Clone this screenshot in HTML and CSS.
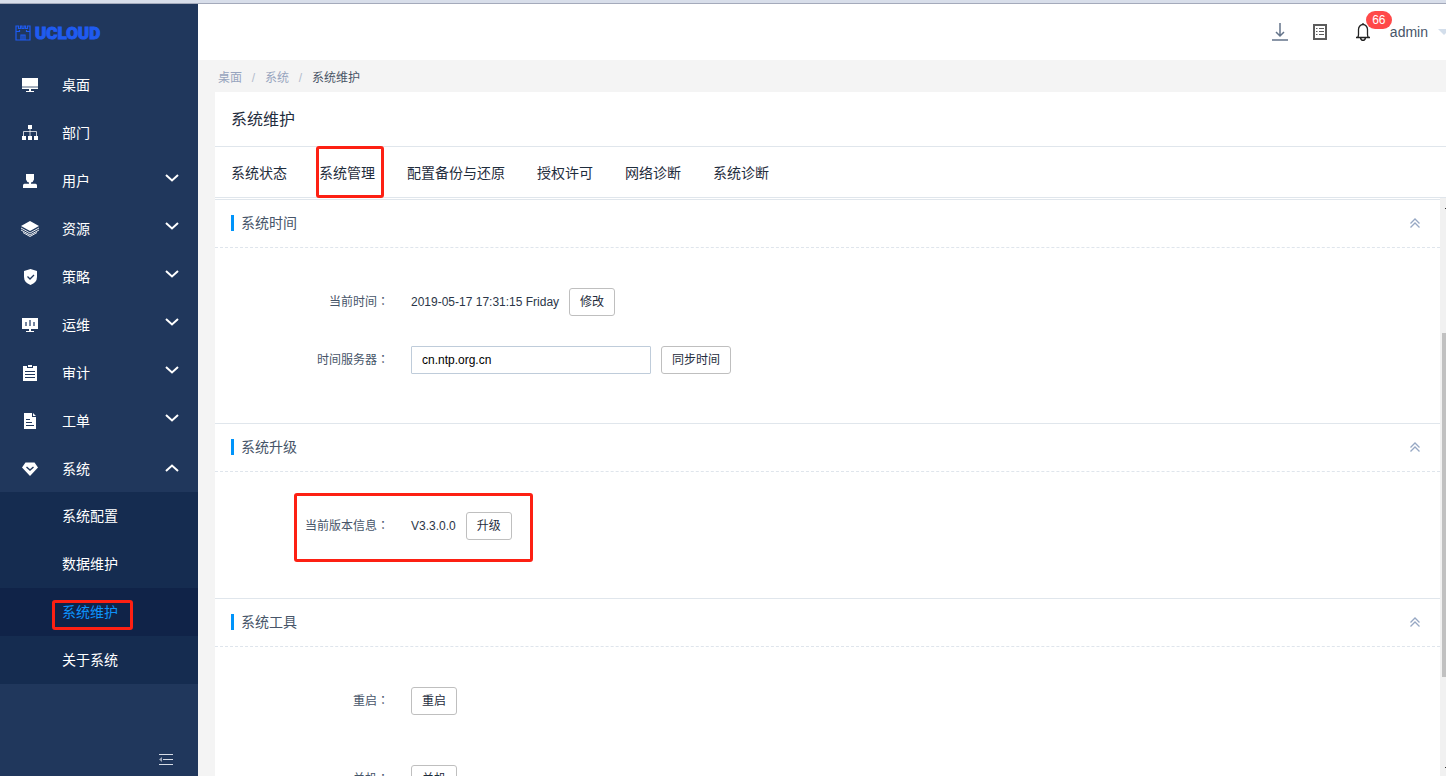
FILE: index.html
```html
<!DOCTYPE html>
<html lang="zh-CN">
<head>
<meta charset="utf-8">
<title>系统维护</title>
<link rel="stylesheet" href="styles.css">
</head>
<body>
<svg class="defs" aria-hidden="true">
  <symbol id="down" viewBox="0 0 14 16"><path d="M1 2l6 5.500L13 2" fill="none" stroke="currentColor" stroke-width="2"/></symbol>
  <symbol id="up" viewBox="0 0 14 16"><path d="M1 10l6-5.500 6 5.500" fill="none" stroke="currentColor" stroke-width="2"/></symbol>
  <symbol id="fold" viewBox="0 0 10 10"><path d="M.5 5.500L5 1l4.500 4.500M.5 9.500L5 5l4.500 4.500" fill="none" stroke="currentColor" stroke-width="1.300"/></symbol>
</svg>
<div class="app">
  <div class="strip"></div>
  <div class="frame">
    <aside class="sidebar">
      <a class="logo" href="#">
        <svg width="16" height="16" viewBox="0 0 16 16" fill="none" stroke="currentColor" stroke-width="1.200"><path d="M1 1h2.500v2.500h2V1h1.500v2.500h2V1h1.500v2.500h2V1H15v14H1zM1 6.500h3.500V5M15 6.500h-3.500V5M6 15v-5h4v5M8 10v5"/></svg>
        <span>UCLOUD</span>
      </a>
      <nav class="menu">
        <a class="item" href="#"><svg class="icon" viewBox="0 0 16 16"><path d="M0 1h16v8H0zM0 11h16v1H0zM7 12h2v2H7zM4 14h8v1H4z"/><path d="M0 9h16v2H0z" opacity=".6"/></svg><span>桌面</span></a>
        <a class="item" href="#"><svg class="icon" viewBox="0 0 16 16"><path d="M6 0h4v4H6zM0 11h4v4H0zM6 11h4v4H6zM12 11h4v4h-4z"/><path d="M8 4v7M1.500 11V6.500h13V11" fill="none" stroke="currentColor" opacity=".75"/></svg><span>部门</span></a>
        <a class="item" href="#"><svg class="icon" viewBox="0 0 16 16"><path d="M4 1h8v5.500Q11 9.500 9 9.500v1.200h4.500Q15 11 15 12.500V15H1v-2.500Q1 11 2.500 10.700H7V9.500Q5 9.500 4 6.500z"/></svg><span>用户</span><svg class="arrow"><use href="#down"/></svg></a>
        <a class="item" href="#"><svg class="icon" viewBox="0 0 20 16"><path d="M10 0l9 5-9 5-9-5z"/><path d="M1 7l9 5 9-5M1 9l9 5 9-5M3 11.500l7 4 7-4" fill="none" stroke="currentColor" stroke-width=".9"/></svg><span>资源</span><svg class="arrow"><use href="#down"/></svg></a>
        <a class="item" href="#"><svg class="icon" viewBox="0 0 16 16"><path d="M8.500 0L15 2v6q0 5.500-6.500 8Q2 13.500 2 8V2z"/><path d="M5.500 7.500L8 10l4-4" fill="none" stroke="#20375c" stroke-width="1.300"/></svg><span>策略</span><svg class="arrow"><use href="#down"/></svg></a>
        <a class="item" href="#"><svg class="icon" viewBox="0 0 16 16"><path d="M0 1h16v11H0zM7 12h2v2H7zM4 14h8v1H4z"/><path d="M3 5h2v4H3zM7 3h2v6H7zM11 5h2v4h-2z" fill="#7585a0"/></svg><span>运维</span><svg class="arrow"><use href="#down"/></svg></a>
        <a class="item" href="#"><svg class="icon" viewBox="0 0 16 16"><path d="M1 1h4v2h6V1h4v15H1zM6 0h4v2H6z"/><path d="M3 6.500h10M3 9.500h10M3 12.500h10" stroke="#20375c"/></svg><span>审计</span><svg class="arrow"><use href="#down"/></svg></a>
        <a class="item" href="#"><svg class="icon" viewBox="0 0 16 16"><path d="M2 0h8v4h4v12H2zM11 0l3 3h-3z"/><path d="M4 6.500h4M4 9.500h6M4 12.500h8" stroke="#20375c"/></svg><span>工单</span><svg class="arrow"><use href="#down"/></svg></a>
        <a class="item" href="#"><svg class="icon" viewBox="0 0 16 16"><path d="M3.500 1.500h9L16 6.500 8 15 0 6.500z"/><path d="M4.500 6L8 9l3.500-3" fill="none" stroke="#20375c" stroke-width="1.400"/></svg><span>系统</span><svg class="arrow"><use href="#up"/></svg></a>
        <div class="submenu">
          <a class="subitem" href="#">系统配置</a>
          <a class="subitem" href="#">数据维护</a>
          <a class="subitem active" href="#">系统维护<i class="mark mark-menu"></i></a>
          <a class="subitem" href="#">关于系统</a>
        </div>
      </nav>
      <button class="collapse" aria-label="收起菜单"><svg width="14" height="14" viewBox="0 0 14 14"><path d="M0 1.500h14M4 6.500h10M0 11.500h14" stroke="currentColor"/><path d="M0 6.500L3 4v5z" fill="currentColor" opacity=".7"/></svg></button>
    </aside>
    <div class="main">
      <header class="topbar">
        <button class="tool" aria-label="下载"><svg width="16" height="18" viewBox="0 0 16 18" fill="none" stroke="#64748a" stroke-width="1.500"><path d="M8 0v13M4 9l4 4 4-4M0 17h16"/></svg></button>
        <button class="tool" aria-label="任务"><svg width="16" height="18" viewBox="0 0 16 18" fill="none" stroke="#5c5c5c"><path d="M2 2h12v14H2z" stroke-width="2"/><path d="M4 5.500h1.500M7 5.500h5M4 8.500h1.500M7 8.500h5M4 11.500h1.500M7 11.500h5"/></svg></button>
        <button class="tool bell" aria-label="消息"><svg width="16" height="18" viewBox="0 0 16 18" fill="none" stroke="#222" stroke-width="1.300"><path d="M1 14.500h14M2.500 14.500q1-1 1-3V6.500a4.500 5 0 0 1 9 0v5q0 2 1 3M8 0v2M5.500 15q.5 2.300 2.500 2.300t2.500-2.300"/></svg><span class="badge">66</span></button>
        <button class="account">admin<svg width="8" height="8" viewBox="0 0 8 8"><path d="M0 1h12L6 7z" fill="#d3deeb"/></svg></button>
      </header>
      <nav class="crumbs"><a href="#">桌面</a><i>/</i><a href="#">系统</a><i>/</i><span>系统维护</span></nav>
      <main class="panel">
        <h1>系统维护</h1>
        <nav class="tabs">
          <a href="#">系统状态</a>
          <a href="#">系统管理<i class="mark mark-tab"></i></a>
          <a href="#">配置备份与还原</a>
          <a href="#">授权许可</a>
          <a href="#">网络诊断</a>
          <a href="#">系统诊断</a>
        </nav>
        <div class="scroll">
          <div class="content">
            <section>
              <h2>系统时间<button class="fold" aria-label="折叠系统时间"><svg width="10" height="10"><use href="#fold"/></svg></button></h2>
              <div class="body near">
                <div class="row"><span class="label">当前时间<b lang="zh-TW">：</b></span><div class="value"><span>2019-05-17 17:31:15 Friday</span><button class="btn">修改</button></div></div>
                <div class="row"><label class="label" for="ntp">时间服务器<b lang="zh-TW">：</b></label><div class="value"><input id="ntp" type="text" value="cn.ntp.org.cn"><button class="btn">同步时间</button></div></div>
              </div>
            </section>
            <section>
              <h2>系统升级<button class="fold" aria-label="折叠系统升级"><svg width="10" height="10"><use href="#fold"/></svg></button></h2>
              <div class="body single">
                <div class="row"><span class="label">当前版本信息<b lang="zh-TW">：</b></span><div class="value"><span>V3.3.0.0</span><button class="btn">升级</button></div><i class="mark mark-row"></i></div>
              </div>
            </section>
            <section>
              <h2>系统工具<button class="fold" aria-label="折叠系统工具"><svg width="10" height="10"><use href="#fold"/></svg></button></h2>
              <div class="body far">
                <div class="row"><span class="label">重启<b lang="zh-TW">：</b></span><div class="value"><button class="btn">重启</button></div></div>
                <div class="row"><span class="label">关机<b lang="zh-TW">：</b></span><div class="value"><button class="btn">关机</button></div></div>
              </div>
            </section>
          </div>
          <div class="track"><div class="cap"></div><div class="thumb"></div><div class="cap"></div></div>
        </div>
      </main>
    </div>
  </div>
</div>
</body>
</html>
```

FILE: styles.css
```css
* { box-sizing: border-box; }
body {
  margin: 0;
  font: 12px/20px "Liberation Sans", "Noto Sans CJK SC", sans-serif;
  color: #2b3648;
  background: #f4f4f4;
}
a { color: inherit; text-decoration: none; }
button { margin: 0; padding: 0; border: 0; background: none; font: inherit; color: inherit; }
h1, h2 { margin: 0; font-weight: 400; }
svg { display: block; flex: none; }
.defs { display: none; }

.app { height: 100vh; display: flex; flex-direction: column; overflow: hidden; }
.strip { flex: none; height: 4px; background: #d8deea; border-bottom: 1px solid #a4aabb; }
.frame { flex: 1; min-height: 0; display: flex; }

.sidebar {
  width: 198px;
  flex: none;
  display: flex;
  flex-direction: column;
  background: #20375c;
  color: #fff;
  font-size: 14px;
}
.logo {
  height: 56px;
  padding: 2px 15px 0;
  display: flex;
  align-items: center;
  gap: 4px;
  color: #1f5bf0;
  font: 900 17px/20px Roboto, sans-serif;
  -webkit-text-stroke: 1px #1f5bf0;
}
.menu { flex: 1; }
.item { display: flex; align-items: center; height: 48px; padding: 2px 19px 0 20px; }
.icon { width: 20px; height: 16px; margin-right: 22px; fill: currentColor; }
.arrow { width: 14px; height: 16px; margin-left: auto; }
.submenu { background: #152c50; }
.subitem { position: relative; display: block; height: 48px; padding-left: 62px; line-height: 48px; }
.subitem.active { background: #102348; color: #0d93fb; }
.collapse { align-self: flex-end; margin: 0 25px 9px; color: #d5dbe5; }

.mark { position: absolute; border: 3px solid #fd2013; border-radius: 3px; pointer-events: none; }
.mark-menu { left: 52px; top: 12px; width: 81px; height: 30px; }
.mark-tab { left: -3px; top: -1px; width: 68px; height: 52px; }
.mark-row { left: 79px; top: -19px; width: 239px; height: 69px; }

.main { flex: 1; min-width: 0; display: flex; flex-direction: column; }
.topbar {
  flex: none;
  height: 56px;
  display: flex;
  align-items: center;
  justify-content: flex-end;
  background: #fff;
}
.tool { margin-right: 24px; }
.bell { position: relative; margin: 0 19px 0 3px; }
.badge {
  position: absolute;
  left: 11px;
  top: -12px;
  width: 26px;
  height: 18px;
  border-radius: 9px;
  background: #ff4949;
  color: #fff;
  line-height: 18px;
  text-align: center;
}
.account { display: flex; align-items: center; gap: 10px; font-size: 14px; color: #475569; }

.crumbs { flex: none; height: 32px; padding: 4px 20px 0; display: flex; align-items: center; color: #4a5466; }
.crumbs a { color: #97a4be; }
.crumbs i { width: 23px; text-align: center; font-style: normal; color: #b3bccd; }

.panel { flex: 1; min-height: 0; margin-left: 17px; display: flex; flex-direction: column; background: #fff; }
h1 { flex: none; padding: 2px 16px 0; font-size: 16px; line-height: 52px; color: #1f2d3d; }
.tabs {
  flex: none;
  display: flex;
  gap: 32px;
  padding: 0 16px;
  border: solid #e0e6ec;
  border-width: 1px 0;
  font-size: 14px;
  color: #1f2d3d;
}
.tabs a { position: relative; height: 50px; padding-top: 2px; line-height: 48px; }
.scroll { flex: 1; min-height: 0; display: flex; }
.content { flex: 1; min-width: 0; padding-top: 1px; overflow: hidden; }
section { border-top: 1px solid #e0e6ec; }
h2 {
  display: flex;
  align-items: center;
  height: 48px;
  padding: 0 20px 2px 16px;
  border-bottom: 1px dashed #dfe5ec;
  font-size: 14px;
  color: #475569;
}
h2::before { content: ""; width: 3px; height: 16px; margin-right: 7px; background: #0094fa; }
.fold { margin-left: auto; color: #97a8c4; }
.body { display: flex; flex-direction: column; padding: 40px 0 49px; }
.near { gap: 30px; }
.single { padding-bottom: 58px; }
.far { gap: 50px; }
.row { position: relative; display: flex; align-items: center; height: 28px; }
.label { width: 174px; margin-right: 22px; text-align: right; color: #475569; }
.label b { font-family: "Noto Sans CJK TC", sans-serif; font-weight: 400; line-height: 1; }
.value { display: flex; align-items: center; gap: 10px; }
.btn { height: 28px; padding: 0 10px; border: 1px solid #bfbfbf; border-radius: 3px; background: #fff; color: #1f2d3d; }
input { width: 240px; height: 28px; padding: 0 10px; border: 1px solid #bfccda; border-radius: 1px; font: inherit; color: #000; }
.track { width: 6px; flex: none; display: flex; flex-direction: column; background: #f1f1f1; }
.cap { flex: none; width: 1px; height: 1px; margin: 10px 0 8px 5px; background: #333; }
.thumb { height: 59.5%; margin: 116px 0 auto 2px; background: #c1c1c1; }
```
